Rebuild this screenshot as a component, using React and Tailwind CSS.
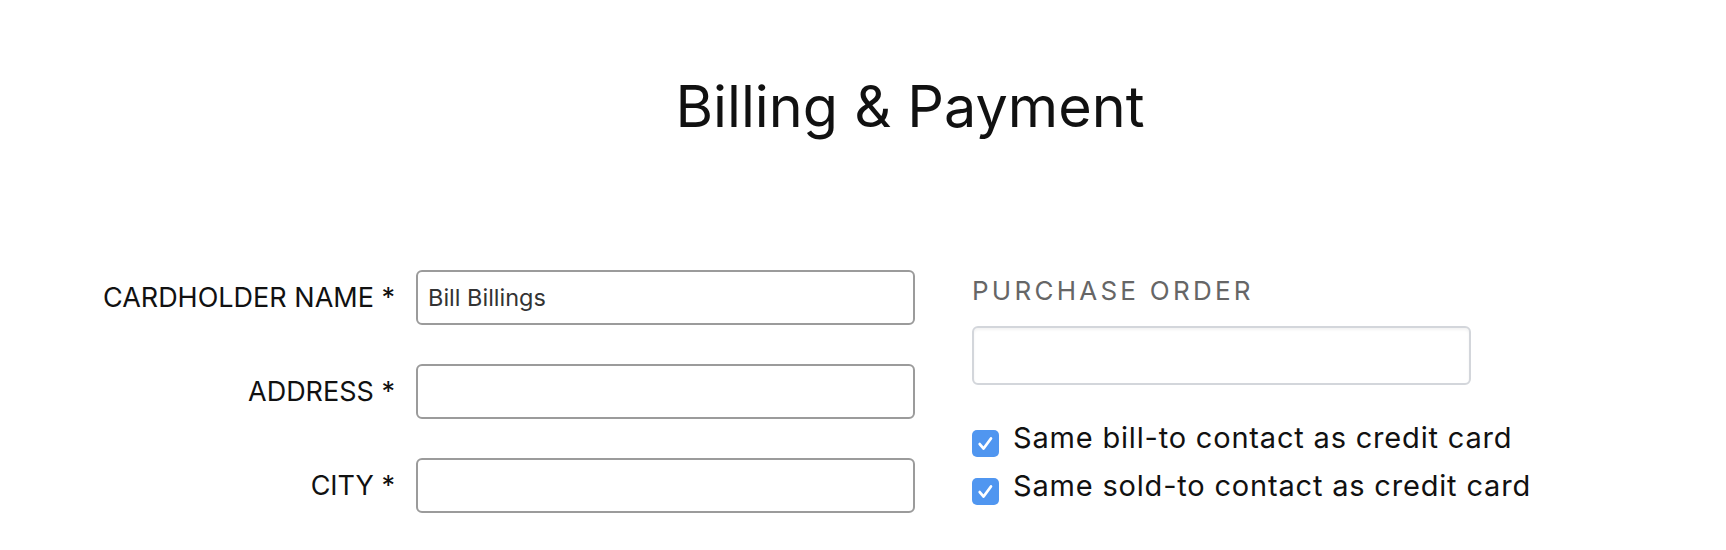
import { useState } from "react";

function Field({ label, value }) {
  return (
    <div className="flex items-center">
      <label className="w-[303px] text-right text-[27px] leading-none text-[#111]">{label}</label>
      <input
        defaultValue={value}
        className="ml-[21px] h-[55px] w-[499px] rounded-[6px] border-2 border-[#9b9b9b] bg-white px-[10px] text-[23.5px] text-[#333] outline-none"
      />
    </div>
  );
}

function Check({ label, checked, onChange }) {
  return (
    <label className="flex items-start cursor-pointer">
      <span
        onClick={onChange}
        className={`mt-[7px] flex h-[27px] w-[27px] shrink-0 items-center justify-center rounded-[5px] ${
          checked ? "bg-[#5096f0]" : "border-2 border-[#9b9b9b] bg-white"
        }`}
      >
        {checked && (
          <svg width="21" height="21" viewBox="0 0 20 20" fill="none">
            <path d="M4.5 10.5 L8.2 14.8 L15.2 5.2" stroke="white" strokeWidth="2.6" strokeLinecap="round" strokeLinejoin="round" />
          </svg>
        )}
      </span>
      <span className="ml-[14px] text-[29px] leading-[29px] tracking-[0.028em] text-[#111]">{label}</span>
    </label>
  );
}

export default function App() {
  const [billTo, setBillTo] = useState(true);
  const [soldTo, setSoldTo] = useState(true);

  return (
    <div className="min-h-[550px] w-full bg-white font-['Inter',sans-serif]">
      {/* Title */}
      <div className="pl-[94px] pt-[78px] text-center">
        <h1 className="text-[57.5px] font-normal leading-none text-[#111]">Billing &amp; Payment</h1>
      </div>

      {/* Form */}
      <div className="mt-[134px] flex pl-[92px]">
        <div className="flex flex-col gap-[39px]">
          <Field label="CARDHOLDER NAME *" value="Bill Billings" />
          <Field label="ADDRESS *" />
          <Field label="CITY *" />
        </div>

        <div className="ml-[57px] mt-[8px] flex flex-col">
          <div className="text-[26px] leading-none tracking-[0.125em] text-[#666]">PURCHASE ORDER</div>
          <input className="mt-[22px] h-[59px] w-[499px] rounded-[6px] border-2 border-[#d3d6db] bg-white px-[10px] text-[22px] outline-none shadow-[inset_0_2px_3px_rgba(0,0,0,0.05)]" />
          <div className="mt-[38px] flex flex-col gap-[14px]">
            <Check label="Same bill-to contact as credit card" checked={billTo} onChange={() => setBillTo(!billTo)} />
            <Check label="Same sold-to contact as credit card" checked={soldTo} onChange={() => setSoldTo(!soldTo)} />
          </div>
        </div>
      </div>
    </div>
  );
}
